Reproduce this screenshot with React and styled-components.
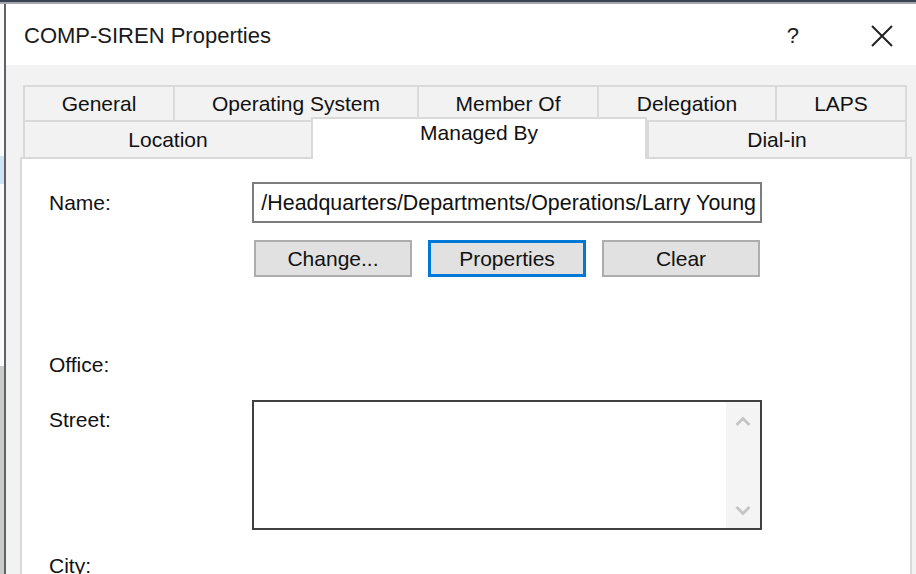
import React from 'react';
import styled, { createGlobalStyle } from 'styled-components';

const GlobalStyle = createGlobalStyle`
  html, body {
    margin: 0;
    padding: 0;
    background: #f2f2f2;
    overflow: hidden;
  }
  body {
    font-family: 'Liberation Sans', Arial, sans-serif;
    color: #111;
  }
`;

const Screen = styled.div`
  width: 916px;
  height: 574px;
  display: flex;
  flex-direction: column;
  overflow: hidden;
`;

const TopEdge = styled.div`
  height: 4px;
  flex: 0 0 4px;
  background: linear-gradient(to bottom, #3c4350 0 2px, #a3a8b0 2px 4px);
`;

const Desktop = styled.div`
  flex: 1;
  display: flex;
  min-height: 0;
`;

const Backdrop = styled.div`
  width: 4px;
  flex: 0 0 4px;
  background: linear-gradient(
    to bottom,
    #fafafa 0 152px,
    #cfe3f5 152px 180px,
    #fafafa 180px 362px,
    #c9cdc9 362px
  );
`;

const Dialog = styled.div`
  flex: 1;
  display: flex;
  flex-direction: column;
  border-left: 2px solid #5e6166;
  background: #f2f2f2;
  min-width: 0;
`;

const TitleBar = styled.div`
  height: 61px;
  flex: 0 0 61px;
  background: #fff;
  display: flex;
  align-items: center;
  padding: 2px 23px 0 18px;
  box-sizing: border-box;
`;

const Title = styled.div`
  flex: 1;
  font-size: 22px;
  line-height: 26px;
  color: #1a1a1a;
`;

const Controls = styled.div`
  display: flex;
  align-items: center;
  gap: 72px;
`;

const Help = styled.span`
  font-size: 22px;
  line-height: 26px;
  color: #222;
`;

const Close = styled.span`
  display: flex;
  width: 22px;
  height: 22px;
`;

const Client = styled.div`
  flex: 1;
  display: flex;
  flex-direction: column;
  padding: 20px 4px 0 14px;
  min-height: 0;
`;

const Tabs = styled.div`
  display: flex;
  flex-direction: column;
  margin: 0 5px 0 3px;
`;

const TabRow = styled.div`
  display: flex;
  align-items: flex-start;
  height: ${(p) => p.$h}px;
`;

const Tab = styled.div`
  box-sizing: border-box;
  flex: 0 0 ${(p) => p.$w}px;
  height: ${(p) => p.$h}px;
  display: flex;
  align-items: center;
  justify-content: center;
  background: #f2f2f2;
  border-top: 2px solid #d9d9d9;
  border-left: 2px solid #d9d9d9;
  font-size: 21px;
  line-height: 24px;
  color: #111;
  white-space: nowrap;

  &:last-child {
    border-right: 2px solid #d9d9d9;
  }
`;

const ActiveTab = styled(Tab)`
  position: relative;
  z-index: 1;
  background: #fff;
  height: ${(p) => p.$h + 5}px;
  margin-top: -3px;
  margin-bottom: -2px;
  padding-bottom: 12px;
  border-right: 2px solid #d9d9d9;
`;

const Panel = styled.div`
  flex: 1;
  background: #fff;
  border: 2px solid #d9d9d9;
  border-bottom: none;
  padding: 23px 0 0 27px;
`;

const Row = styled.div`
  display: flex;
  align-items: ${(p) => p.$align || 'center'};
  margin-top: ${(p) => p.$mt || 0}px;
`;

const Label = styled.div`
  width: 203px;
  flex: 0 0 203px;
  font-size: 21px;
  line-height: 24px;
  color: #111;
  padding-top: ${(p) => p.$pt || 0}px;
`;

const TextBox = styled.div`
  box-sizing: border-box;
  width: 510px;
  height: 41px;
  border: 2px solid #7d7d7d;
  padding: 0 4px;
  display: flex;
  align-items: center;
  justify-content: flex-end;
  overflow: hidden;
  white-space: nowrap;
  font-size: 21.4px;
  line-height: 24px;
  color: #111;
  background: #fff;
`;

const ButtonBar = styled.div`
  display: flex;
  gap: 16px;
  padding-left: 2px;
`;

const Button = styled.button`
  box-sizing: border-box;
  width: 158px;
  height: 37px;
  margin: 0;
  padding: 0;
  background: #e1e1e1;
  border: 2px solid ${(p) => (p.$default ? '#0078d7' : '#adadad')};
  box-shadow: ${(p) => (p.$default ? 'inset 0 0 0 1px #0078d7' : 'none')};
  font-family: 'Liberation Sans', Arial, sans-serif;
  font-size: 21px;
  line-height: 24px;
  color: #111;
`;

const MultiLine = styled.div`
  box-sizing: border-box;
  width: 510px;
  height: 130px;
  border: 2px solid #404040;
  background: #fff;
  display: flex;
  justify-content: flex-end;
`;

const ScrollBar = styled.div`
  width: 34px;
  background: #f4f4f4;
  display: flex;
  flex-direction: column;
  align-items: center;
  justify-content: space-between;
  padding: 14px 0 12px;
`;

const Chevron = ({ down }) => (
  <svg width="16" height="11" viewBox="0 0 16 11">
    <polyline
      points={down ? '1.5,2 8,8.5 14.5,2' : '1.5,9 8,2.5 14.5,9'}
      fill="none"
      stroke="#c6c6c6"
      strokeWidth="3"
    />
  </svg>
);

const topTabs = [
  { label: 'General', w: 150 },
  { label: 'Operating System', w: 244 },
  { label: 'Member Of', w: 180 },
  { label: 'Delegation', w: 178 },
  { label: 'LAPS', w: 132 },
];

const bottomTabs = [
  { label: 'Location', w: 288 },
  { label: 'Managed By', w: 336, active: true },
  { label: 'Dial-in', w: 260 },
];

export default function App() {
  return (
    <>
      <GlobalStyle />
      <Screen>
        <TopEdge />
        <Desktop>
          <Backdrop />
          <Dialog>
            <TitleBar>
              <Title>COMP-SIREN Properties</Title>
              <Controls>
                <Help>?</Help>
                <Close>
                  <svg width="22" height="22" viewBox="0 0 22 22">
                    <path d="M1 1 L21 21 M21 1 L1 21" stroke="#222" strokeWidth="2" fill="none" />
                  </svg>
                </Close>
              </Controls>
            </TitleBar>
            <Client>
              <Tabs>
                <TabRow $h={35}>
                  {topTabs.map((t) => (
                    <Tab key={t.label} $w={t.w} $h={35}>{t.label}</Tab>
                  ))}
                </TabRow>
                <TabRow $h={37}>
                  {bottomTabs.map((t) =>
                    t.active ? (
                      <ActiveTab key={t.label} $w={t.w} $h={37}>{t.label}</ActiveTab>
                    ) : (
                      <Tab key={t.label} $w={t.w} $h={37}>{t.label}</Tab>
                    )
                  )}
                </TabRow>
              </Tabs>
              <Panel>
                <Row>
                  <Label>Name:</Label>
                  <TextBox>/Headquarters/Departments/Operations/Larry Young</TextBox>
                </Row>
                <Row $mt={17}>
                  <Label />
                  <ButtonBar>
                    <Button>Change...</Button>
                    <Button $default>Properties</Button>
                    <Button>Clear</Button>
                  </ButtonBar>
                </Row>
                <Row $mt={76}>
                  <Label>Office:</Label>
                </Row>
                <Row $mt={23} $align="flex-start">
                  <Label $pt={8}>Street:</Label>
                  <MultiLine>
                    <ScrollBar>
                      <Chevron />
                      <Chevron down />
                    </ScrollBar>
                  </MultiLine>
                </Row>
                <Row $mt={24}>
                  <Label>City:</Label>
                </Row>
              </Panel>
            </Client>
          </Dialog>
        </Desktop>
      </Screen>
    </>
  );
}
